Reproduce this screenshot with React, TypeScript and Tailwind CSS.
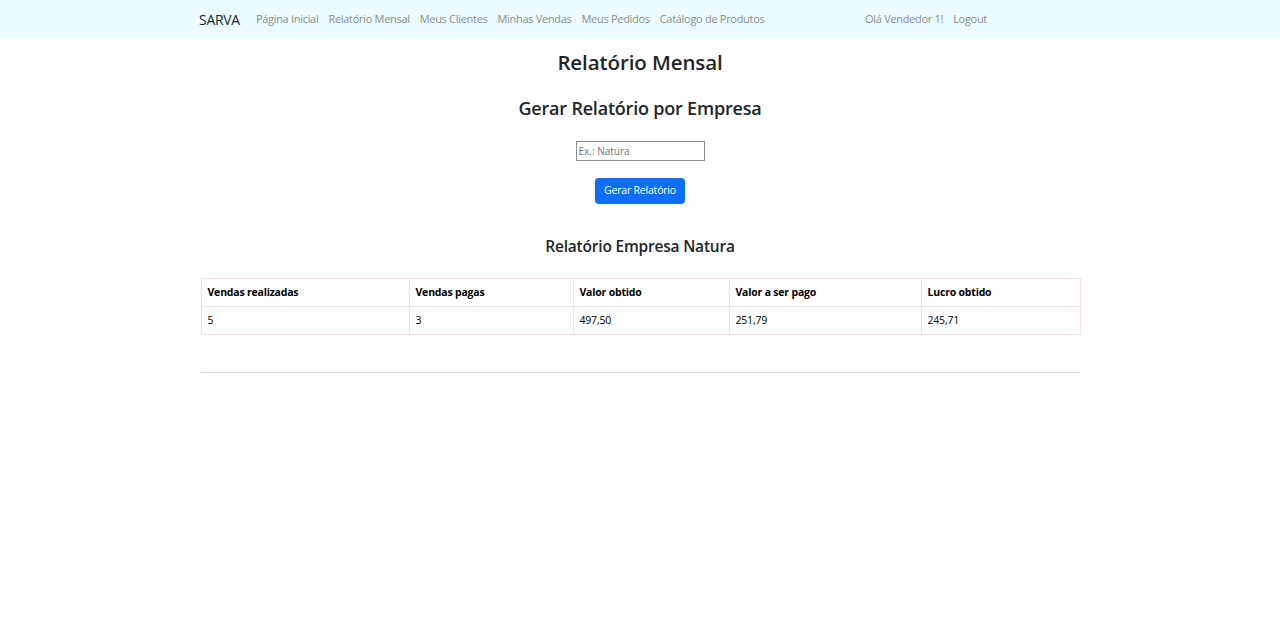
import React from 'react';

const font = { fontFamily: '"Open Sans", "Noto Sans", sans-serif' };

export default function App() {
  const links = [
    'Página Inicial',
    'Relatório Mensal',
    'Meus Clientes',
    'Minhas Vendas',
    'Meus Pedidos',
    'Catálogo de Produtos',
  ];

  const cols = [
    { label: 'Vendas realizadas', value: '5', w: 'w-[208px]' },
    { label: 'Vendas pagas', value: '3', w: 'w-[164px]' },
    { label: 'Valor obtido', value: '497,50', w: 'w-[156px]' },
    { label: 'Valor a ser pago', value: '251,79', w: 'w-[192px]' },
    { label: 'Lucro obtido', value: '245,71', w: 'w-[159px]' },
  ];

  return (
    <div className="min-h-screen bg-white text-[#212529]" style={font}>
      {/* Navbar */}
      <nav className="h-[38px] bg-[#ebfdff]">
        <div className="w-[882px] mx-auto h-full flex items-center">
          <span className="text-[14px] text-[#212529] tracking-[-0.3px]">SARVA</span>
          <div className="flex items-center gap-[10px] ml-[16px] text-[11px] text-[#8c8c8c] tracking-[-0.3px]">
            {links.map((l) => (
              <a key={l} href="#">{l}</a>
            ))}
          </div>
          <div className="flex items-center gap-[10px] ml-auto mr-[94px] text-[11px] text-[#8c8c8c] tracking-[-0.3px]">
            <span>Olá Vendedor 1!</span>
            <a href="#">Logout</a>
          </div>
        </div>
      </nav>

      {/* Content */}
      <main className="w-[879px] mx-auto">
        <h1 className="text-center text-[20.5px] font-semibold leading-[24px] mt-[12px] tracking-[-0.1px]">
          Relatório Mensal
        </h1>
        <h2 className="text-center text-[18px] font-semibold leading-[22px] mt-[23px] tracking-[-0.2px]">
          Gerar Relatório por Empresa
        </h2>

        <div className="flex flex-col items-center mt-[22px]">
          <input
            type="text"
            placeholder="Ex.: Natura"
            className="w-[129px] h-[20px] border border-[#8a8a8a] px-[2px] text-[10px] text-[#333] placeholder:text-[#6c757d] outline-none"
          />
          <button className="mt-[17px] w-[90px] h-[26px] rounded-[4px] bg-[#0d6efd] text-white text-[10.5px] tracking-[-0.2px]">
            Gerar Relatório
          </button>
        </div>

        <h3 className="text-center text-[15.5px] font-semibold leading-[20px] mt-[32px] tracking-[-0.2px]">
          Relatório Empresa Natura
        </h3>

        <table className="mt-[22px] w-full border-collapse table-fixed text-[10.5px] text-black">
          <thead>
            <tr className="h-[28px]">
              {cols.map((c) => (
                <th
                  key={c.label}
                  className={`${c.w} border border-[#f5e1df] text-left font-bold px-[6px] tracking-[-0.2px]`}
                >
                  {c.label}
                </th>
              ))}
            </tr>
          </thead>
          <tbody>
            <tr className="h-[28px]">
              {cols.map((c) => (
                <td key={c.label} className="border border-[#f5e1df] px-[6px] tracking-[-0.2px]">
                  {c.value}
                </td>
              ))}
            </tr>
          </tbody>
        </table>

        <hr className="mt-[37px] border-t border-[#dcdcdc]" />
      </main>
    </div>
  );
}
